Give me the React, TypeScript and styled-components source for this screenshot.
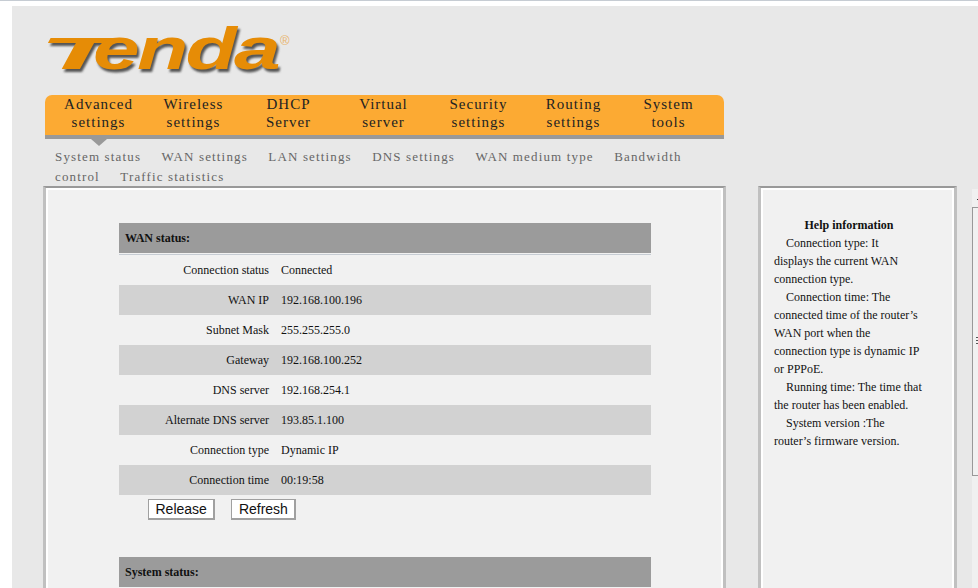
import styled, { createGlobalStyle } from "styled-components";

const GlobalStyle = createGlobalStyle`
  html, body {
    margin: 0;
    height: 100%;
    overflow: hidden;
    background: #fff;
  }
  #root {
    height: 100%;
  }
`;

const Page = styled.div`
  height: 100%;
  box-sizing: border-box;
  border-top: 1px solid #c6ccd3;
  padding: 5px 0 0 12px;
  font-family: "Liberation Serif", "Times New Roman", serif;
  color: #111;
`;

const Shell = styled.div`
  height: 100%;
  background: #e8e8e8;
  overflow: hidden;
`;

const LogoBox = styled.div`
  box-sizing: border-box;
  height: 89px;
  padding: 14px 0 0 30px;
`;

const LogoMark = styled.svg`
  display: block;
`;

const NavBar = styled.ul`
  position: relative;
  display: flex;
  list-style: none;
  box-sizing: border-box;
  width: 679px;
  height: 44px;
  margin: 0 0 0 33px;
  padding: 0 0 0 6px;
  background: #fcaa33;
  border-bottom: 4px solid #999;
  border-radius: 7px 7px 0 0;
`;

const NavItem = styled.li`
  width: 95px;
  font-size: 15px;
  line-height: 18px;
  letter-spacing: 1px;
  text-align: center;
  color: #222;
`;

const NavArrow = styled.div`
  position: absolute;
  left: 46px;
  bottom: -11px;
  width: 0;
  height: 0;
  border-left: 8px solid transparent;
  border-right: 8px solid transparent;
  border-top: 7px solid #999;
`;

const SubNav = styled.div`
  box-sizing: border-box;
  width: 679px;
  height: 47px;
  margin-left: 33px;
  padding: 8px 0 0 10px;
  font-size: 13px;
  line-height: 20px;
  letter-spacing: 1.15px;
  color: #666;
`;

const SubLink = styled.span`
  margin-right: 16px;
`;

const Columns = styled.div`
  display: flex;
  align-items: stretch;
  height: 420px;
`;

const Panel = styled.section`
  box-sizing: border-box;
  border-top: 2px solid #999;
  border-left: 3px solid #c0c0c0;
  border-right: 3px solid #c0c0c0;
  background: #f1f1f1;
  box-shadow: inset 2px 2px 0 #fff, inset -2px 0 0 #fff;
`;

const MainPanel = styled(Panel)`
  width: 683px;
  margin-left: 31px;
  padding: 35px 0 0 73px;
`;

const HelpPanel = styled(Panel)`
  width: 199px;
  margin-left: 32px;
  padding: 28px 0 0 13px;
`;

const Group = styled.div`
  width: 532px;
`;

const GroupTitle = styled.h2<{ $ruled?: boolean }>`
  box-sizing: content-box;
  height: 30px;
  margin: 0;
  padding-left: 6px;
  background: #9b9b9b;
  font-size: 12px;
  font-weight: 700;
  line-height: 30px;
  box-shadow: ${(p) => (p.$ruled ? "0 1px 0 #f1f1f1, 0 2px 0 #c6ccd3" : "none")};
`;

const StatusList = styled.div`
  padding-top: 2px;
`;

const StatusRow = styled.div<{ $shaded: boolean }>`
  display: grid;
  grid-template-columns: 150px 1fr;
  column-gap: 12px;
  height: 30px;
  font-size: 12px;
  line-height: 30px;
  background: ${(p) => (p.$shaded ? "#d2d2d2" : "transparent")};
`;

const RowLabel = styled.span`
  text-align: right;
`;

const ButtonRow = styled.div`
  display: flex;
  gap: 16px;
  margin: 4px 0 37px;
  padding-left: 29px;
`;

const ActionButton = styled.button`
  box-sizing: border-box;
  height: 21px;
  padding: 0 6.5px;
  background: #fff;
  border: solid #a0a0a0;
  border-width: 1px 2px 2px 1px;
  font-family: "Liberation Sans", Arial, sans-serif;
  font-size: 14px;
  line-height: 17px;
  color: #111;
`;

const HelpBody = styled.div`
  width: 150px;
  font-size: 12px;
  line-height: 18px;
`;

const HelpTitle = styled.h3`
  margin: 0;
  font-size: 12px;
  font-weight: 700;
  line-height: 18px;
  text-align: center;
`;

const HelpText = styled.p`
  margin: 0;
  text-indent: 12px;
  white-space: pre-line;
`;

const SideFrame = styled.aside`
  position: relative;
  box-sizing: border-box;
  flex: 1;
  margin: 3px 0 0 15px;
  background: #f0f0f0;
`;

const SideTick = styled.div`
  position: absolute;
  top: 10px;
  left: 5px;
  width: 3px;
  height: 1px;
  background: #333;
`;

const SideBox = styled.div`
  position: absolute;
  top: 18px;
  left: 0;
  right: 0;
  height: 267px;
  background: #f1f1f1;
  border: solid #999;
  border-width: 1px 0 1px 1px;
`;

const SideGrip = styled.div`
  position: absolute;
  top: 129px;
  left: 3px;
  width: 3px;
  height: 7px;
  background: repeating-linear-gradient(#555 0 1px, transparent 1px 3px);
`;

const navItems = [
  ["Advanced", "settings"],
  ["Wireless", "settings"],
  ["DHCP", "Server"],
  ["Virtual", "server"],
  ["Security", "settings"],
  ["Routing", "settings"],
  ["System", "tools"],
];

const subLinks = [
  "System status",
  "WAN settings",
  "LAN settings",
  "DNS settings",
  "WAN medium type",
  "Bandwidth control",
  "Traffic statistics",
];

const wanRows = [
  ["Connection status", "Connected"],
  ["WAN IP", "192.168.100.196"],
  ["Subnet Mask", "255.255.255.0"],
  ["Gateway", "192.168.100.252"],
  ["DNS server", "192.168.254.1"],
  ["Alternate DNS server", "193.85.1.100"],
  ["Connection type", "Dynamic IP"],
  ["Connection time", "00:19:58"],
];

const helpLines = [
  "Connection type: It\ndisplays the current WAN connection type.",
  "Connection time: The connected time of the router\u2019s WAN port when the connection type is dynamic IP or PPPoE.",
  "Running time: The time that the router has been enabled.",
  "System version :The router\u2019s firmware version.",
];

const Logo = () => (
  <LogoMark width="250" height="60" viewBox="0 0 250 60">
    <defs>
      <filter id="soft" x="-5%" y="-5%" width="110%" height="120%">
        <feGaussianBlur stdDeviation="1" />
      </filter>
    </defs>
    <g fontFamily="Liberation Sans" fontWeight="700" fontStyle="italic" filter="url(#soft)" fill="#555">
      <text transform="translate(-1 52) scale(2.8 1)" fontSize="45">T</text>
      <text transform="translate(53 52) scale(1.4 1)" fontSize="60" letterSpacing="-2">enda</text>
    </g>
    <g fontFamily="Liberation Sans" fontWeight="700" fontStyle="italic" fill="#e68c06">
      <text transform="translate(-3 49) scale(2.8 1)" fontSize="45">T</text>
      <text transform="translate(51 49) scale(1.4 1)" fontSize="60" letterSpacing="-2">enda</text>
    </g>
    <text x="238" y="25" fontFamily="Liberation Sans" fontSize="13" fill="#e8b46a">®</text>
  </LogoMark>
);

export default function App() {
  return (
    <Page>
      <GlobalStyle />
      <Shell>
        <LogoBox>
          <Logo />
        </LogoBox>
        <NavBar>
          {navItems.map(([top, bottom]) => (
            <NavItem key={top + bottom}>
              {top}
              <br />
              {bottom}
            </NavItem>
          ))}
          <NavArrow />
        </NavBar>
        <SubNav>
          {subLinks.map((link) => (
            <SubLink key={link}>{link} </SubLink>
          ))}
        </SubNav>
        <Columns>
          <MainPanel>
            <Group>
              <GroupTitle $ruled>WAN status:</GroupTitle>
              <StatusList>
                {wanRows.map(([label, value], i) => (
                  <StatusRow key={label} $shaded={i % 2 === 1}>
                    <RowLabel>{label}</RowLabel>
                    <span>{value}</span>
                  </StatusRow>
                ))}
              </StatusList>
              <ButtonRow>
                <ActionButton>Release</ActionButton>
                <ActionButton>Refresh</ActionButton>
              </ButtonRow>
              <GroupTitle>System status:</GroupTitle>
            </Group>
          </MainPanel>
          <HelpPanel>
            <HelpBody>
              <HelpTitle>Help information</HelpTitle>
              {helpLines.map((line) => (
                <HelpText key={line}>{line}</HelpText>
              ))}
            </HelpBody>
          </HelpPanel>
          <SideFrame>
            <SideTick />
            <SideBox>
              <SideGrip />
            </SideBox>
          </SideFrame>
        </Columns>
      </Shell>
    </Page>
  );
}
